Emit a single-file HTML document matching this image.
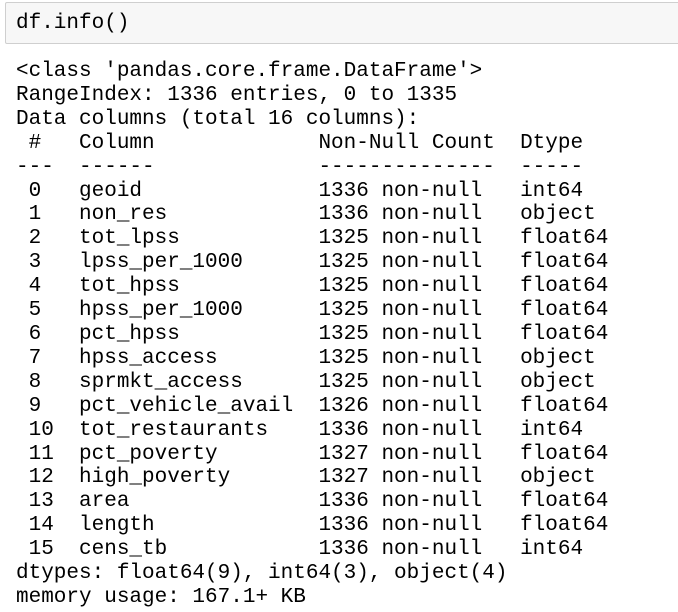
<!DOCTYPE html>
<html><head><style>
html,body{margin:0;padding:0;background:#fff;width:678px;height:612px;overflow:hidden}
.inp{position:absolute;left:5px;top:2px;width:690px;height:40px;background:#f7f7f7;border:1px solid #cfcfcf;border-radius:2px}
pre{margin:0;font-family:"Liberation Mono",monospace;font-size:21px;color:#000;position:absolute;left:16px;white-space:pre}
.code{top:12px;line-height:24px}
.out{top:60px;line-height:23.9px}
</style></head><body>
<div class="inp"></div>
<pre class="code">df.info()</pre>
<pre class="out">&lt;class 'pandas.core.frame.DataFrame'&gt;
RangeIndex: 1336 entries, 0 to 1335
Data columns (total 16 columns):
 #   Column             Non-Null Count  Dtype  
---  ------             --------------  -----  
 0   geoid              1336 non-null   int64  
 1   non_res            1336 non-null   object 
 2   tot_lpss           1325 non-null   float64
 3   lpss_per_1000      1325 non-null   float64
 4   tot_hpss           1325 non-null   float64
 5   hpss_per_1000      1325 non-null   float64
 6   pct_hpss           1325 non-null   float64
 7   hpss_access        1325 non-null   object 
 8   sprmkt_access      1325 non-null   object 
 9   pct_vehicle_avail  1326 non-null   float64
 10  tot_restaurants    1336 non-null   int64  
 11  pct_poverty        1327 non-null   float64
 12  high_poverty       1327 non-null   object 
 13  area               1336 non-null   float64
 14  length             1336 non-null   float64
 15  cens_tb            1336 non-null   int64  
dtypes: float64(9), int64(3), object(4)
memory usage: 167.1+ KB</pre>
</body></html>
